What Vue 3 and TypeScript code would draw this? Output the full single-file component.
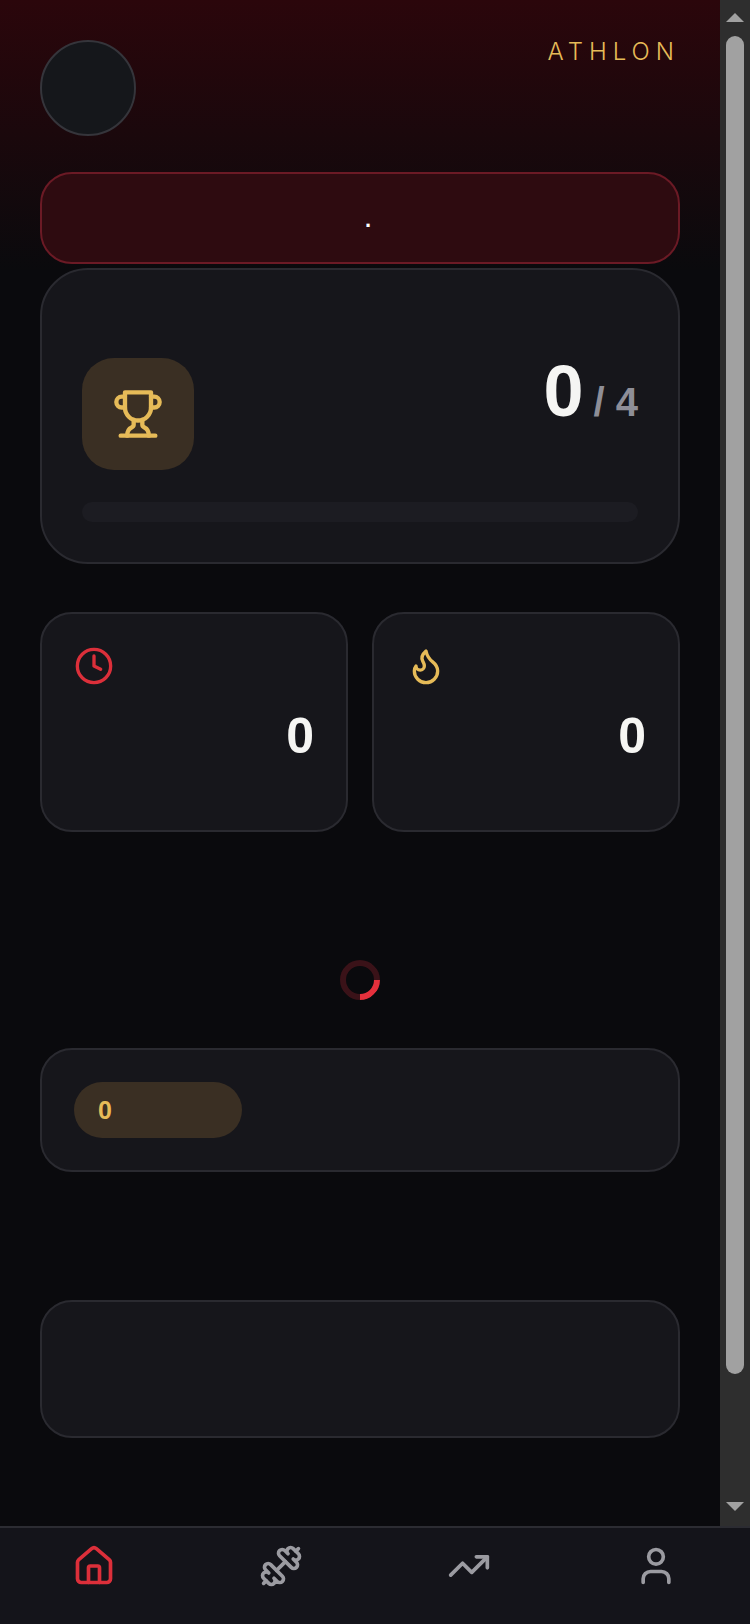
<template>
  <div class="page">
    <div class="viewport">
      <main class="content">
        <header class="top">
          <div class="avatar"></div>
          <span class="brand">ATHLON</span>
        </header>

        <div class="alert"><span class="alert-text">.</span></div>

        <section class="card hero">
          <div class="hero-row">
            <div class="hero-icon">
              <svg class="icon-trophy" viewBox="0 0 24 24">
                <path d="M6 9H4.5a2.5 2.5 0 0 1 0-5H6" />
                <path d="M18 9h1.5a2.5 2.5 0 0 0 0-5H18" />
                <path d="M4 22h16" />
                <path d="M10 14.66V17c0 .55-.47.98-.97 1.21C7.85 18.75 7 20.24 7 22" />
                <path d="M14 14.66V17c0 .55.47.98.97 1.21C16.15 18.75 17 20.24 17 22" />
                <path d="M18 2H6v7a6 6 0 0 0 12 0V2Z" />
              </svg>
            </div>
            <div class="hero-count">
              <span class="hero-value">0</span>
              <span class="hero-total">/ 4</span>
            </div>
          </div>
          <div class="progress"></div>
        </section>

        <section class="stats">
          <div class="card stat">
            <svg class="icon-small red" viewBox="0 0 24 24">
              <circle cx="12" cy="12" r="10" />
              <path d="M12 6v6l4 2" />
            </svg>
            <div class="stat-value">0</div>
          </div>
          <div class="card stat">
            <svg class="icon-small gold" viewBox="0 0 24 24">
              <path d="M8.5 14.5A2.5 2.5 0 0 0 11 12c0-1.38-.5-2-1-3-1.072-2.143-.224-4.054 2-6 .5 2.5 2 4.9 4 6.5 2 1.6 3 3.5 3 5.5a7 7 0 1 1-14 0c0-1.153.433-2.294 1-3a2.5 2.5 0 0 0 2.5 2.5z" />
            </svg>
            <div class="stat-value">0</div>
          </div>
        </section>

        <div class="spinner"></div>

        <section class="card streak">
          <div class="pill">0</div>
        </section>

        <section class="card empty"></section>
      </main>

      <div class="scrollbar">
        <span class="arrow up"></span>
        <span class="thumb"></span>
        <span class="arrow down"></span>
      </div>
    </div>

    <nav class="tabs">
      <button v-for="tab in tabs" :key="tab.name" class="tab" :class="{ active: tab.active }" :aria-label="tab.name">
        <svg class="icon" viewBox="0 0 24 24">
          <path v-for="d in tab.paths" :key="d" :d="d" />
          <circle v-if="tab.name === 'profile'" cx="12" cy="7" r="4" />
        </svg>
      </button>
    </nav>
  </div>
</template>

<script setup lang="ts">
interface Tab {
  name: string
  active?: boolean
  paths: string[]
}

const tabs: Tab[] = [
  {
    name: 'home',
    active: true,
    paths: [
      'M15 21v-8a1 1 0 0 0-1-1h-4a1 1 0 0 0-1 1v8',
      'M3 10a2 2 0 0 1 .709-1.528l7-5.999a2 2 0 0 1 2.582 0l7 5.999A2 2 0 0 1 21 10v9a2 2 0 0 1-2 2H5a2 2 0 0 1-2-2z',
    ],
  },
  {
    name: 'workouts',
    paths: [
      'M9.6 14.4 14.4 9.6',
      'M5.343 21.485a2 2 0 1 0 2.829-2.828l1.767 1.768a2 2 0 1 0 2.829-2.829l-6.364-6.364a2 2 0 1 0-2.829 2.829l1.768 1.767a2 2 0 1 0-2.828 2.829z',
      'm2.5 21.5 1.4-1.4',
      'M20.1 3.9 21.5 2.5',
      'M17.596 12.768a2 2 0 1 0 2.829-2.829l-1.768-1.767a2 2 0 1 0 2.828-2.829l-2.828-2.828a2 2 0 1 0-2.829 2.828l-1.767-1.768a2 2 0 1 0-2.829 2.829z',
    ],
  },
  {
    name: 'progress',
    paths: ['M16 7h6v6', 'm22 7-8.5 8.5-5-5L2 17'],
  },
  {
    name: 'profile',
    paths: ['M19 21v-2a4 4 0 0 0-4-4H9a4 4 0 0 0-4 4v2'],
  },
]
</script>

<style>
html,
body {
  margin: 0;
  background: #0a0a0d;
}
</style>

<style scoped>
.page {
  display: flex;
  flex-direction: column;
  height: 1624px;
  overflow: hidden;
  font-family: "Liberation Sans", Arial, sans-serif;
  color: #f5f5f3;
}

.viewport {
  display: flex;
  flex: 1;
  min-height: 0;
}

.content {
  flex: 1;
  min-width: 0;
  padding: 40px 40px 0;
  background: linear-gradient(180deg, #2b060b 0, #0a0a0d 270px);
}

.top {
  display: flex;
  justify-content: space-between;
  align-items: flex-start;
}

.avatar {
  box-sizing: border-box;
  width: 96px;
  height: 96px;
  background: #15171b;
  border: 2px solid #35353b;
  border-radius: 50%;
}

.brand {
  font-family: Inter, sans-serif;
  font-size: 24px;
  font-weight: 300;
  line-height: 24px;
  letter-spacing: 6px;
  color: #e6bb58;
}

.alert {
  box-sizing: border-box;
  display: flex;
  justify-content: center;
  height: 92px;
  margin-top: 36px;
  padding-top: 31px;
  padding-left: 16px;
  background: #2e0b10;
  border: 2px solid #6b1a25;
  border-radius: 32px;
}

.alert-text {
  font-size: 22px;
  font-weight: 700;
  line-height: 29px;
  color: #fff;
}

.card {
  box-sizing: border-box;
  background: #16161b;
  border: 2px solid #2a2a30;
}

.hero {
  height: 296px;
  margin-top: 4px;
  padding: 88px 40px 0;
  border-radius: 48px;
}

.hero-row {
  display: flex;
  justify-content: space-between;
  align-items: flex-start;
}

.hero-icon {
  display: flex;
  justify-content: center;
  align-items: center;
  width: 112px;
  height: 112px;
  background: #3a2f23;
  border-radius: 32px;
}

.icon-trophy {
  width: 52px;
  height: 52px;
  fill: none;
  stroke: #e6bb58;
  stroke-width: 2;
  stroke-linecap: round;
  stroke-linejoin: round;
}

.hero-count {
  display: flex;
  align-items: baseline;
  gap: 10px;
  font-weight: 700;
  line-height: 66px;
}

.hero-value {
  font-size: 72px;
}

.hero-total {
  font-size: 40px;
  color: #8e8e97;
}

.progress {
  height: 20px;
  margin-top: 32px;
  background: #1c1c22;
  border-radius: 10px;
}

.stats {
  display: grid;
  grid-template-columns: 1fr 1fr;
  gap: 24px;
  margin-top: 48px;
}

.stat {
  height: 220px;
  padding: 32px;
  border-radius: 32px;
}

.icon,
.icon-small {
  display: block;
  fill: none;
  stroke: currentColor;
  stroke-width: 2;
  stroke-linecap: round;
  stroke-linejoin: round;
}

.icon {
  width: 44px;
  height: 44px;
}

.icon-small {
  width: 40px;
  height: 40px;
}

.red {
  color: #dc2f3a;
}

.gold {
  color: #e6bb58;
}

.stat-value {
  margin-top: 21px;
  font-size: 50px;
  line-height: 58px;
  font-weight: 700;
  text-align: right;
}

.spinner {
  box-sizing: border-box;
  width: 40px;
  height: 40px;
  margin: 128px auto 0;
  border: 6px solid #3a1218;
  border-right-color: #e5303c;
  border-radius: 50%;
  transform: rotate(45deg);
}

.streak {
  height: 124px;
  margin-top: 48px;
  padding: 32px;
  border-radius: 32px;
}

.pill {
  box-sizing: border-box;
  width: 168px;
  height: 56px;
  padding: 0 24px;
  background: #3a2f23;
  border-radius: 28px;
  font-size: 25px;
  line-height: 56px;
  font-weight: 700;
  color: #e6bb58;
}

.empty {
  height: 138px;
  margin-top: 128px;
  border-radius: 32px;
}

.scrollbar {
  display: flex;
  flex-direction: column;
  align-items: center;
  width: 30px;
  padding-top: 13px;
  background: #2e2e2e;
}

.thumb {
  width: 18px;
  height: 1338px;
  margin-top: 14px;
  background: #a1a1a1;
  border-radius: 9px;
}

.arrow {
  width: 0;
  height: 0;
  border-left: 9px solid transparent;
  border-right: 9px solid transparent;
}

.arrow.up {
  border-bottom: 9px solid #a1a1a1;
}

.arrow.down {
  margin-top: 128px;
  border-top: 9px solid #a1a1a1;
}

.tabs {
  box-sizing: border-box;
  display: flex;
  height: 98px;
  background: #14141a;
  border-top: 2px solid #2c2c32;
}

.tab {
  display: flex;
  flex: 1;
  justify-content: center;
  height: 100%;
  padding: 16px 0 0;
  background: none;
  border: none;
  color: #9b9ba1;
}

.tab.active {
  color: #dc2f3a;
}
</style>
